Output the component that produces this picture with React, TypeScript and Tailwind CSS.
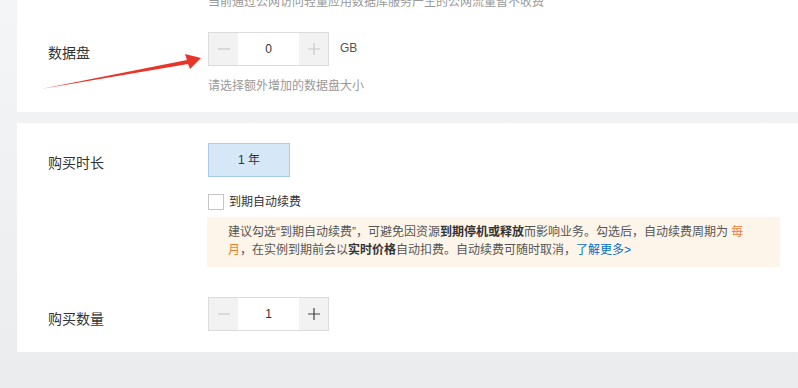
import React from 'react';

const font = { fontFamily: '"Liberation Sans", "Noto Sans CJK SC", sans-serif' };

function Stepper({ value, canAdd }: { value: number; canAdd: boolean }) {
  return (
    <div className="flex h-[34px] w-[121px] border border-[#dcdcdc]">
      <div className="flex w-[29px] items-center justify-center bg-[#f2f2f2]">
        <svg width="14" height="14" viewBox="0 0 14 14">
          <path d="M1 7h12" stroke="#c8c8c8" strokeWidth="1.2" />
        </svg>
      </div>
      <div className="flex flex-1 items-center justify-center bg-white text-[12px] text-[#333]">{value}</div>
      <div className="flex w-[29px] items-center justify-center bg-[#f2f2f2]">
        <svg width="14" height="14" viewBox="0 0 14 14">
          <path d="M1 7h12M7 1v12" stroke={canAdd ? '#444' : '#c8c8c8'} strokeWidth="1.2" />
        </svg>
      </div>
    </div>
  );
}

export default function App() {
  return (
    <div className="relative h-[388px] overflow-hidden bg-gradient-to-b from-[#f4f5f6] to-[#ebecee] pl-[17px]" style={font}>
      {/* 数据盘 */}
      <div className="bg-white pl-[31px] pb-[17px]">
        <div className="-mt-[7px] flex">
          <div className="w-[160px]" />
          <div className="text-[12px] leading-[18px] text-[#999]">当前通过公网访问轻量应用数据库服务产生的公网流量暂不收费</div>
        </div>
        <div className="mt-[21px] flex">
          <div className="w-[160px] pt-[11px] text-[14px] leading-[20px] text-[#333]">数据盘</div>
          <div>
            <div className="flex items-center">
              <Stepper value={0} canAdd={false} />
              <span className="ml-[11px] -mt-[2px] text-[12px] text-[#555]">GB</span>
            </div>
            <div className="mt-[11px] text-[12px] leading-[18px] text-[#999]">请选择额外增加的数据盘大小</div>
          </div>
        </div>
      </div>

      {/* 购买时长 / 数量 */}
      <div className="mt-[11px] bg-white pl-[31px] pt-[20px] pb-[21px]">
        <div className="flex">
          <div className="w-[160px] pt-[10px] text-[14px] leading-[20px] text-[#333]">购买时长</div>
          <div>
            <div className="flex h-[34px] w-[82px] items-center justify-center border border-[#a9cbec] bg-[#d6e7f8] text-[12px] text-[#333]">
              1 年
            </div>
            <label className="mt-[17px] flex items-center">
              <span className="h-[16px] w-[16px] border border-[#c4c4c4] bg-white" />
              <span className="ml-[5px] text-[12px] leading-[16px] text-[#333]">到期自动续费</span>
            </label>
          </div>
        </div>
        <div className="mt-[7px] ml-[159px] w-[573px] bg-[#fef5ea] pl-[21px] pr-[10px] pt-[6px] pb-[8px] text-[12px] leading-[18px] text-[#555]">
          建议勾选“到期自动续费”，可避免因资源<b className="font-bold text-[#333]">到期停机或释放</b>而影响业务。勾选后，自动续费周期为 <span className="text-[#f07c2a]">每</span>
          <br />
          <span className="text-[#f07c2a]">月</span>，在实例到期前会以<b className="font-bold text-[#333]">实时价格</b>自动扣费。自动续费可随时取消，<span className="text-[#0070cc]">了解更多&gt;</span>
        </div>
        <div className="mt-[30px] flex">
          <div className="w-[160px] pt-[12px] text-[14px] leading-[20px] text-[#333]">购买数量</div>
          <Stepper value={1} canAdd={true} />
        </div>
      </div>

      {/* annotation arrow */}
      <svg className="pointer-events-none absolute left-0 top-0" width="220" height="100" viewBox="0 0 220 100">
        <polygon points="41,89 187,60 185,54 201,58 190,69 188,64" fill="#e8352a" />
      </svg>
    </div>
  );
}
